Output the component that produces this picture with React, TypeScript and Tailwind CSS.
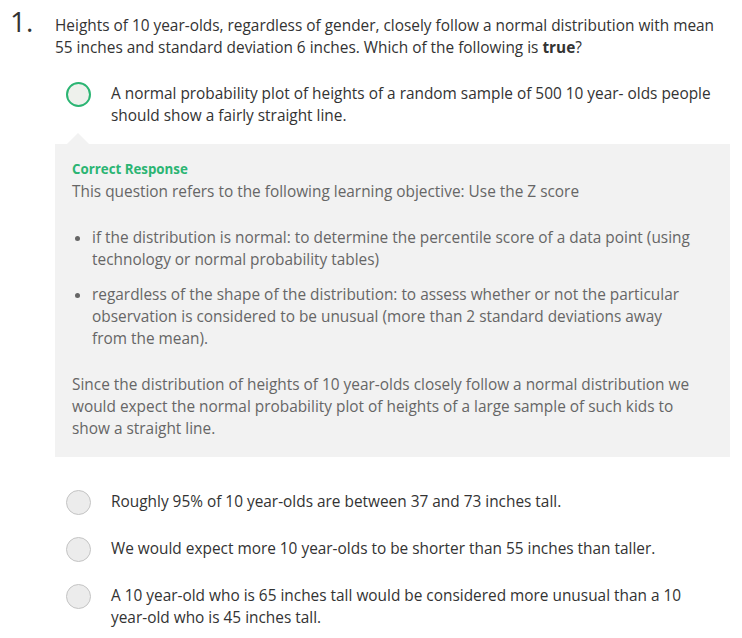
const Radio = ({ selected = false }: { selected?: boolean }) =>
  selected ? (
    <span className="mt-[-1px] block h-[25px] w-[25px] shrink-0 rounded-full border-2 border-[#2bb573] bg-[#eef1ec]" />
  ) : (
    <span className="mt-[-1px] block h-[25px] w-[25px] shrink-0 rounded-full border border-[#c4c4c4] bg-[#ececec]" />
  );

const Option = ({ children, selected = false }: { children: React.ReactNode; selected?: boolean }) => (
  <div className="flex items-start pl-[11px]">
    <Radio selected={selected} />
    <p className="ml-[20px] text-[15.4px] leading-[22px] text-[#333]">{children}</p>
  </div>
);

export default function App() {
  return (
    <div
      className="min-h-screen bg-white pl-[10px] pr-[12px] text-[#333]"
      style={{ fontFamily: '"Open Sans", "Liberation Sans", sans-serif' }}
    >
      <div className="flex">
        <div className="w-[45px] shrink-0 pt-[4px] text-[28px] leading-[34px]">1.</div>
        <div className="flex-1 pt-[15px]">
          <p className="whitespace-nowrap text-[15.4px] leading-[22px]">
            Heights of 10 year-olds, regardless of gender, closely follow a normal distribution with mean
            <br />
            55 inches and standard deviation 6 inches. Which of the following is <b className="font-bold">true</b>?
          </p>

          <div className="mt-[24px]">
            <Option selected>
              A normal probability plot of heights of a random sample of 500 10 year- olds people
              <br />
              should show a fairly straight line.
            </Option>
          </div>
        </div>
      </div>

      <div className="relative ml-[45px] mt-[17px] bg-[#f2f2f2] pb-[17px] pl-[17px] pr-[20px] pt-[14px] text-[15.4px] leading-[22px] text-[#666]">
        <span className="absolute left-[12px] top-[-11px] h-0 w-0 border-x-[11px] border-b-[11px] border-x-transparent border-b-[#f2f2f2]" />
        <p className="text-[13.3px] font-bold leading-[22px] text-[#2bb573]">Correct Response</p>
        <p className="mt-[1px]">This question refers to the following learning objective: Use the Z score</p>
        <ul className="mt-[24px] list-disc pl-[20px] marker:text-[#666]">
          <li>
            if the distribution is normal: to determine the percentile score of a data point (using
            <br />
            technology or normal probability tables)
          </li>
          <li className="mt-[13px]">
            regardless of the shape of the distribution: to assess whether or not the particular
            <br />
            observation is considered to be unusual (more than 2 standard deviations away
            <br />
            from the mean).
          </li>
        </ul>
        <p className="mt-[24px]">
          Since the distribution of heights of 10 year-olds closely follow a normal distribution we
          <br />
          would expect the normal probability plot of heights of a large sample of such kids to
          <br />
          show a straight line.
        </p>
      </div>

      <div className="ml-[45px] flex flex-col gap-[23px] pb-[10px] pt-[34px]">
        <Option>Roughly 95% of 10 year-olds are between 37 and 73 inches tall.</Option>
        <Option>We would expect more 10 year-olds to be shorter than 55 inches than taller.</Option>
        <Option>
          A 10 year-old who is 65 inches tall would be considered more unusual than a 10
          <br />
          year-old who is 45 inches tall.
        </Option>
      </div>
    </div>
  );
}
